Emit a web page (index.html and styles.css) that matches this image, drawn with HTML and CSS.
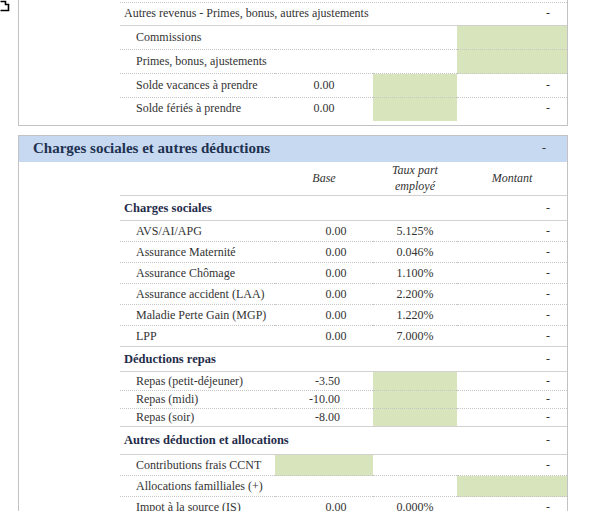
FILE: index.html
```html
<!DOCTYPE html>
<html lang="fr">
<head>
<meta charset="utf-8">
<title>Fiche de salaire</title>
<link rel="stylesheet" href="styles.css">
</head>
<body>
<div class="cursor"><svg width="12" height="14" viewBox="0 0 12 14"><path d="M0.5 1.5H5.5V4.5H8.5V10.5H0.5" fill="#fff" stroke="#000" stroke-width="1.6"/></svg></div>

<section class="panel panel-top">
  <div class="tbl">
    <div class="spacer"></div>
    <div class="row r23 solid">
      <div class="lbl grp-plain span3">Autres revenus - Primes, bonus, autres ajustements</div>
      <div class="mnt">-</div>
    </div>
    <div class="row r24">
      <div class="lbl sub">Commissions</div><div class="base"></div><div class="taux"></div><div class="mnt green"></div>
    </div>
    <div class="row r24">
      <div class="lbl sub">Primes, bonus, ajustements</div><div class="base"></div><div class="taux"></div><div class="mnt green"></div>
    </div>
    <div class="row r24">
      <div class="lbl sub">Solde vacances à prendre</div><div class="base">0.00</div><div class="taux green"></div><div class="mnt">-</div>
    </div>
    <div class="row r23 last">
      <div class="lbl sub">Solde fériés à prendre</div><div class="base">0.00</div><div class="taux green"></div><div class="mnt">-</div>
    </div>
  </div>
</section>

<section class="panel panel-low">
  <header class="bar">
    <h2>Charges sociales et autres déductions</h2>
    <span class="bar-val">-</span>
  </header>
  <div class="tbl">
    <div class="row head solid">
      <div class="lbl"></div><div class="base">Base</div><div class="taux">Taux part<br>employé</div><div class="mnt-h">Montant</div>
    </div>

    <div class="row r25 solid">
      <div class="lbl grp span3">Charges sociales</div><div class="mnt">-</div>
    </div>
    <div class="row r21 cs">
      <div class="lbl sub">AVS/AI/APG</div><div class="base">0.00</div><div class="taux">5.125%</div><div class="mnt">-</div>
    </div>
    <div class="row r21 cs">
      <div class="lbl sub">Assurance Maternité</div><div class="base">0.00</div><div class="taux">0.046%</div><div class="mnt">-</div>
    </div>
    <div class="row r21 cs">
      <div class="lbl sub">Assurance Chômage</div><div class="base">0.00</div><div class="taux">1.100%</div><div class="mnt">-</div>
    </div>
    <div class="row r21 cs">
      <div class="lbl sub">Assurance accident (LAA)</div><div class="base">0.00</div><div class="taux">2.200%</div><div class="mnt">-</div>
    </div>
    <div class="row r21 cs">
      <div class="lbl sub">Maladie Perte Gain (MGP)</div><div class="base">0.00</div><div class="taux">1.220%</div><div class="mnt">-</div>
    </div>
    <div class="row r21 cs solid">
      <div class="lbl sub">LPP</div><div class="base">0.00</div><div class="taux">7.000%</div><div class="mnt">-</div>
    </div>

    <div class="row r25 solid">
      <div class="lbl grp span3">Déductions repas</div><div class="mnt">-</div>
    </div>
    <div class="row r19 rp">
      <div class="lbl sub">Repas (petit-déjeuner)</div><div class="base">-3.50</div><div class="taux green"></div><div class="mnt">-</div>
    </div>
    <div class="row r18 rp">
      <div class="lbl sub">Repas (midi)</div><div class="base">-10.00</div><div class="taux green"></div><div class="mnt">-</div>
    </div>
    <div class="row r18 rp solid">
      <div class="lbl sub">Repas (soir)</div><div class="base">-8.00</div><div class="taux green"></div><div class="mnt">-</div>
    </div>

    <div class="row r28 solid">
      <div class="lbl grp span3">Autres déduction et allocations</div><div class="mnt">-</div>
    </div>
    <div class="row r21">
      <div class="lbl sub">Contributions frais CCNT</div><div class="base green"></div><div class="taux"></div><div class="mnt">-</div>
    </div>
    <div class="row r21">
      <div class="lbl sub">Allocations familliales (+)</div><div class="base"></div><div class="taux"></div><div class="mnt green"></div>
    </div>
    <div class="row r21 cs">
      <div class="lbl sub">Impot à la source (IS)</div><div class="base">0.00</div><div class="taux">0.000%</div><div class="mnt">-</div>
    </div>
  </div>
</section>
</body>
</html>
```

FILE: styles.css
```css
html, body {
  margin: 0;
  padding: 0;
  background: #fff;
}

body {
  font-family: "Liberation Serif", "Times New Roman", serif;
  font-size: 12px;
  color: #333;
  overflow: hidden;
}

.cursor {
  position: absolute;
  top: 0;
  left: 0;
  width: 12px;
  height: 14px;
}

.cursor svg {
  display: block;
}

.panel {
  margin-left: 18px;
  width: 550px;
  box-sizing: border-box;
  border: 1px solid #c3c3c3;
}

.panel-top {
  border-top: 0;
  padding-bottom: 4px;
}

.panel-low {
  margin-top: 9px;
}

.tbl {
  margin-left: 101px;
}

.spacer {
  height: 2px;
  border-bottom: 1px dotted #c8c8c8;
}

.row {
  display: grid;
  grid-template-columns: 155px 98px 84px 1fr;
}

.row > div {
  display: flex;
  align-items: center;
  box-sizing: border-box;
  border-bottom: 1px dotted #c6c6c6;
  white-space: nowrap;
}

.panel-top .row > div {
  padding-bottom: 1px;
}

.row.solid > div {
  border-bottom: 1px solid #d2d2d2;
}

.panel-top .row.last > div {
  border-bottom: 0;
  padding-bottom: 2px;
}

.r18 > div { height: 18px; }
.r19 > div { height: 19px; }
.r21 > div { height: 21px; }
.r23 > div { height: 23px; }
.r24 > div { height: 24px; }
.r25 > div { height: 25px; }
.r28 > div { height: 28px; }

.span3 {
  grid-column: span 3;
}

.lbl {
  padding-left: 16px;
}

.lbl.grp-plain {
  padding-left: 4px;
}

.lbl.grp {
  padding-left: 4px;
  font-weight: bold;
  color: #1f2d4b;
  font-size: 12.5px;
}

.base,
.taux {
  justify-content: center;
}

.cs .base {
  padding-left: 24px;
}

.rp .base {
  justify-content: flex-end;
  padding-right: 33px;
}

.mnt {
  justify-content: flex-end;
  padding-right: 17px;
}

.green {
  background: #d8e4bc;
}

.head > div {
  height: 34px;
  font-style: italic;
  text-align: center;
  line-height: 16px;
  padding-bottom: 2px;
}

.head .mnt-h {
  justify-content: center;
}

.bar {
  display: flex;
  align-items: center;
  justify-content: space-between;
  box-sizing: border-box;
  height: 26px;
  background: #c6d9f0;
  padding: 0 21px 1px 14px;
}

.bar h2 {
  margin: 0;
  font-size: 15px;
  font-weight: bold;
  color: #1f3151;
}

.bar-val {
  color: #333;
}
```
